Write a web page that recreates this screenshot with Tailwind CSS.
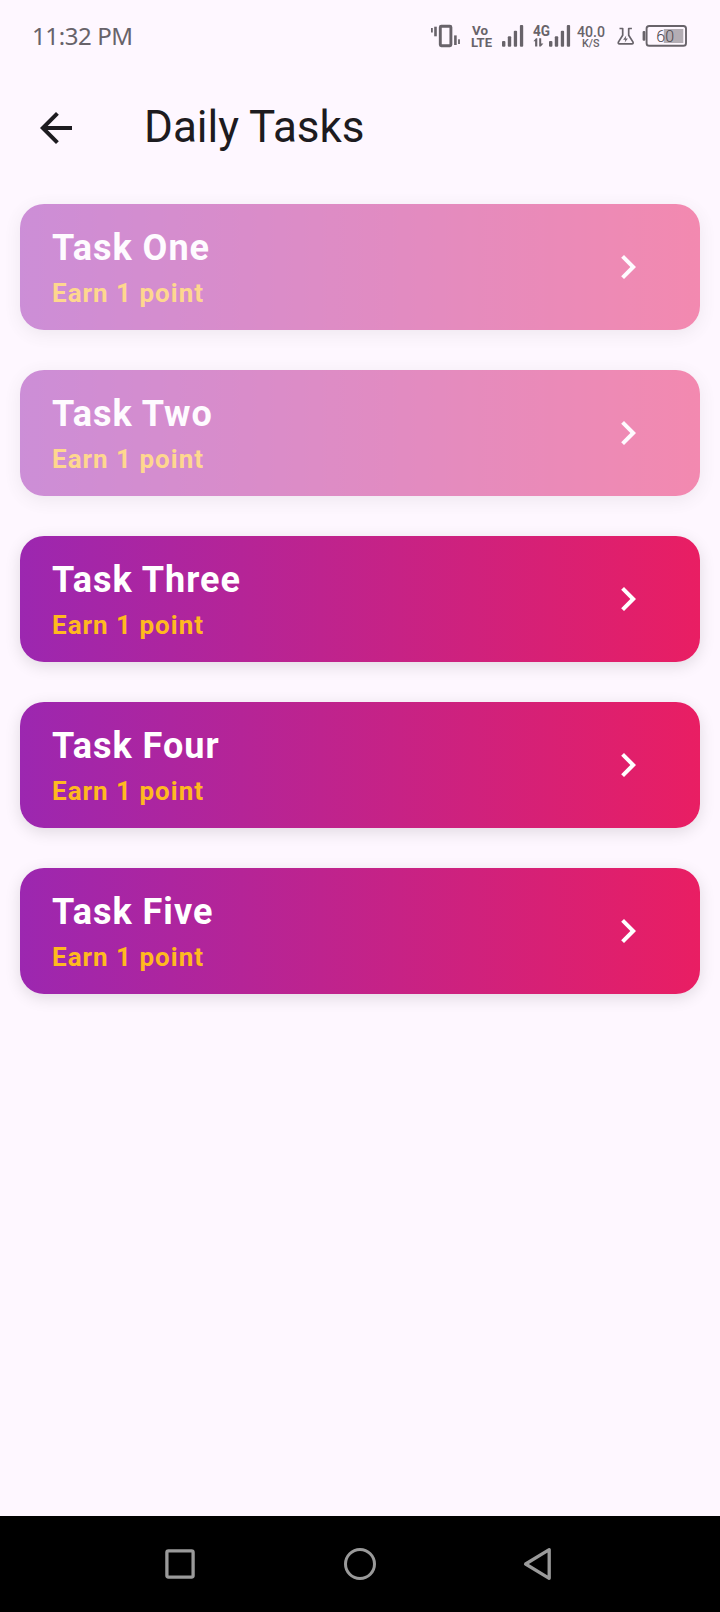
<!DOCTYPE html>
<html lang="en">
<head>
    <meta charset="UTF-8">
    <meta name="viewport" content="width=device-width, initial-scale=1.0">
    <title>Daily Tasks</title>
    <script src="https://cdn.jsdelivr.net/npm/@tailwindcss/browser@4"></script>
</head>
<body class="flex flex-col min-h-screen bg-[#fef7ff] font-['Roboto',sans-serif]">
    <!-- Status Bar -->
    <div class="flex items-center justify-between h-[72px] pl-8 pr-[32px] text-[#68636a]">
        <span class="text-[24px] leading-[32px] tracking-[-0.4px] font-['Noto_Sans',sans-serif]">11:32 PM</span>
        <div class="flex items-center h-8">
            <!-- Vibrate -->
            <svg class="w-[31px] h-8 mr-[10px]" viewBox="430 20 31 32" fill="currentColor">
                <rect x="431" y="28" width="1.8" height="4.5"/>
                <rect x="434.2" y="26.7" width="2.6" height="9.6"/>
                <rect x="440.3" y="26.3" width="10.6" height="19.4" rx="1" fill="none" stroke="currentColor" stroke-width="2.9"/>
                <rect x="454.1" y="35.4" width="2.6" height="9.6"/>
                <rect x="458.1" y="39.3" width="1.8" height="4.7"/>
            </svg>
            <!-- VoLTE -->
            <svg class="w-[22px] h-8 mr-[8px]" viewBox="471 20 22 32" fill="currentColor" font-weight="700">
                <text x="472" y="34.7" font-size="13" textLength="16" lengthAdjust="spacingAndGlyphs">Vo</text>
                <text x="471" y="46.7" font-size="13" textLength="21" lengthAdjust="spacingAndGlyphs">LTE</text>
            </svg>
            <!-- Signal 1 -->
            <svg class="w-[23px] h-8 mr-[8px]" viewBox="501 20 23 32" fill="currentColor">
                <rect x="502" y="41" width="3.4" height="5.7" rx="1"/>
                <rect x="507.8" y="36.3" width="3.4" height="10.4" rx="1"/>
                <rect x="513.8" y="30.7" width="3.3" height="16" rx="1"/>
                <rect x="519.9" y="25" width="3.3" height="21.7" rx="1"/>
            </svg>
            <!-- 4G + Signal 2 -->
            <svg class="w-[39px] h-8 mr-[5px]" viewBox="532 20 39 32" fill="currentColor">
                <text x="533" y="35.5" font-size="14" font-weight="700" textLength="17" lengthAdjust="spacingAndGlyphs">4G</text>
                <path d="M533.4 41.2L536 38.3h1.3v8.2h-2.2v-5.3zM539.2 38.3h2v5.2h2.2l-2.6 3h-1.6z"/>
                <rect x="549" y="41" width="3.4" height="5.7" rx="1"/>
                <rect x="554.8" y="36.3" width="3.4" height="10.4" rx="1"/>
                <rect x="560.8" y="30.7" width="3.3" height="16" rx="1"/>
                <rect x="566.8" y="25" width="3.3" height="21.7" rx="1"/>
            </svg>
            <!-- Network speed -->
            <svg class="w-[30px] h-8 mr-[10px]" viewBox="576 20 30 32" fill="currentColor" font-weight="500">
                <text x="577" y="36.8" font-size="14.5" textLength="28" lengthAdjust="spacingAndGlyphs">40.0</text>
                <text x="582" y="46.8" font-size="10.8" textLength="17.5" lengthAdjust="spacingAndGlyphs">K/S</text>
            </svg>
            <!-- Flask -->
            <svg class="w-[20px] h-8 mr-[6px]" viewBox="616 20 20 32" fill="none" stroke="currentColor" stroke-width="1.7" stroke-linejoin="round">
                <path d="M619.5 28.5h3.2v6.8l-4.2 6.6q-.8 2 1 2h12.4q1.8 0 1-2l-4.2-6.6v-6.8h3.2"/>
                <path d="M626.3 35.5l-3.2 4.2h2.2l-.6 2.8 3.2-4h-2.2z" fill="currentColor" stroke="none"/>
            </svg>
            <!-- Battery -->
            <svg class="w-[46px] h-8" viewBox="642 20 46 32" fill="currentColor">
                <rect x="642.6" y="31" width="2.8" height="9.8" rx="1"/>
                <rect x="663.8" y="29" width="19.5" height="14" fill="#b3adb4"/>
                <rect x="646.6" y="26" width="39.4" height="19.8" rx="2.6" fill="none" stroke="currentColor" stroke-width="1.9"/>
                <text x="656.3" y="41.5" font-size="16" font-weight="300" fill="#4c484e">60</text>
            </svg>
        </div>
    </div>

    <!-- App Bar -->
    <header class="flex items-center h-[112px] px-8 text-[#1d1b20]">
        <a href="#" aria-label="Back">
            <svg class="w-12 h-12" viewBox="0 0 24 24" fill="currentColor">
                <path d="M20 11H7.83l5.59-5.59L12 4l-8 8 8 8 1.41-1.41L7.83 13H20v-2z"/>
            </svg>
        </a>
        <h1 class="ml-16 pb-[2px] text-[44px] leading-[56px] font-normal">Daily Tasks</h1>
    </header>

    <!-- Task List -->
    <main class="flex flex-col flex-1 gap-10 px-5 pt-5">
        <a href="#" class="flex items-center justify-between h-[126px] pl-8 pr-12 rounded-[24px] bg-linear-to-r/srgb from-[#9c27b0] to-[#e91e63] shadow-[0_4px_16px_rgba(0,0,0,0.12)] opacity-50">
            <div class="flex flex-col gap-[9px] pt-px tracking-[1px]">
                <h2 class="text-[36px] leading-[42px] font-bold text-white">Task One</h2>
                <p class="text-[26px] leading-[30px] font-bold text-[#ffb91f]">Earn 1 point</p>
            </div>
            <svg class="w-12 h-12 text-white" viewBox="0 0 24 24" fill="currentColor">
                <path d="M10 6L8.59 7.41 13.17 12l-4.58 4.59L10 18l6-6z"/>
            </svg>
        </a>
        <a href="#" class="flex items-center justify-between h-[126px] pl-8 pr-12 rounded-[24px] bg-linear-to-r/srgb from-[#9c27b0] to-[#e91e63] shadow-[0_4px_16px_rgba(0,0,0,0.12)] opacity-50">
            <div class="flex flex-col gap-[9px] pt-px tracking-[1px]">
                <h2 class="text-[36px] leading-[42px] font-bold text-white">Task Two</h2>
                <p class="text-[26px] leading-[30px] font-bold text-[#ffb91f]">Earn 1 point</p>
            </div>
            <svg class="w-12 h-12 text-white" viewBox="0 0 24 24" fill="currentColor">
                <path d="M10 6L8.59 7.41 13.17 12l-4.58 4.59L10 18l6-6z"/>
            </svg>
        </a>
        <a href="#" class="flex items-center justify-between h-[126px] pl-8 pr-12 rounded-[24px] bg-linear-to-r/srgb from-[#9c27b0] to-[#e91e63] shadow-[0_4px_16px_rgba(0,0,0,0.12)]">
            <div class="flex flex-col gap-[9px] pt-px tracking-[1px]">
                <h2 class="text-[36px] leading-[42px] font-bold text-white">Task Three</h2>
                <p class="text-[26px] leading-[30px] font-bold text-[#ffb91f]">Earn 1 point</p>
            </div>
            <svg class="w-12 h-12 text-white" viewBox="0 0 24 24" fill="currentColor">
                <path d="M10 6L8.59 7.41 13.17 12l-4.58 4.59L10 18l6-6z"/>
            </svg>
        </a>
        <a href="#" class="flex items-center justify-between h-[126px] pl-8 pr-12 rounded-[24px] bg-linear-to-r/srgb from-[#9c27b0] to-[#e91e63] shadow-[0_4px_16px_rgba(0,0,0,0.12)]">
            <div class="flex flex-col gap-[9px] pt-px tracking-[1px]">
                <h2 class="text-[36px] leading-[42px] font-bold text-white">Task Four</h2>
                <p class="text-[26px] leading-[30px] font-bold text-[#ffb91f]">Earn 1 point</p>
            </div>
            <svg class="w-12 h-12 text-white" viewBox="0 0 24 24" fill="currentColor">
                <path d="M10 6L8.59 7.41 13.17 12l-4.58 4.59L10 18l6-6z"/>
            </svg>
        </a>
        <a href="#" class="flex items-center justify-between h-[126px] pl-8 pr-12 rounded-[24px] bg-linear-to-r/srgb from-[#9c27b0] to-[#e91e63] shadow-[0_4px_16px_rgba(0,0,0,0.12)]">
            <div class="flex flex-col gap-[9px] pt-px tracking-[1px]">
                <h2 class="text-[36px] leading-[42px] font-bold text-white">Task Five</h2>
                <p class="text-[26px] leading-[30px] font-bold text-[#ffb91f]">Earn 1 point</p>
            </div>
            <svg class="w-12 h-12 text-white" viewBox="0 0 24 24" fill="currentColor">
                <path d="M10 6L8.59 7.41 13.17 12l-4.58 4.59L10 18l6-6z"/>
            </svg>
        </a>
    </main>

    <!-- Navigation Bar -->
    <nav class="grid grid-cols-3 place-items-center h-24 px-[90px] bg-black text-[#9a9a9a]">
        <svg class="w-10 h-10" viewBox="0 0 40 40" fill="none" stroke="currentColor" stroke-width="3.3">
            <rect x="6.9" y="6.9" width="26.2" height="26.2" rx="1.5"/>
        </svg>
        <svg class="w-10 h-10" viewBox="0 0 40 40" fill="none" stroke="currentColor" stroke-width="3">
            <circle cx="20" cy="20" r="14.5"/>
        </svg>
        <svg class="w-10 h-10" viewBox="0 0 40 40" fill="none" stroke="currentColor" stroke-width="3.3" stroke-linejoin="round">
            <path d="M5.6 20L29.2 5.7v28.6z"/>
        </svg>
    </nav>
</body>
</html>
